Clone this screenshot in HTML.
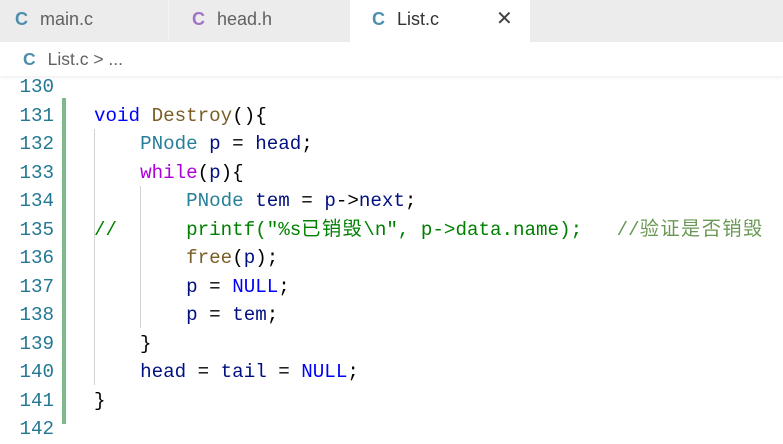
<!DOCTYPE html>
<html><head><meta charset="utf-8"><style>
*{margin:0;padding:0;box-sizing:border-box}
body{width:783px;height:424px;overflow:hidden;background:#fff;position:relative;font-family:"Liberation Sans","Noto Sans CJK SC",sans-serif}
.tabs{position:absolute;left:0;top:0;width:783px;height:42px;background:#ececec}
.tab{position:absolute;top:0;height:42px;font-size:18px;line-height:38px;color:#616161}
.tab .c,.bc .c{font-weight:bold;color:#4d8fad;margin-right:12px}
.bc{position:absolute;top:42px;left:0;width:783px;height:34px;font-size:17.5px;line-height:34px;color:#616161;padding-left:23px;box-shadow:0 2px 3px rgba(0,0,0,0.06)}
.code{position:absolute;left:0;top:73px;width:783px;font-family:"Liberation Mono","Noto Sans CJK SC",monospace;font-size:19.2px}
.ln{position:absolute;left:0;width:54px;text-align:right;color:#237893;height:28.5px;line-height:28.5px}
.tx{position:absolute;left:94px;white-space:pre;height:28.5px;line-height:28.5px;color:#000}
.k{color:#0000ff}.f{color:#795e26}.t{color:#267f99}.v{color:#001080}.m{color:#af00db}.cm{color:#008000}.cm2{color:#6a9955}
.cj{letter-spacing:1.5px}
.bar{position:absolute;left:62px;top:98px;width:4px;height:326px;background:#81b88b}
.g{position:absolute;width:1px;background:#d3d3d3}
</style></head><body>
<div class="tabs">
<div class="tab" style="left:0;width:168px;padding-left:15px"><span class="c">C</span>main.c</div>
<div style="position:absolute;left:168px;top:0;width:1px;height:42px;background:#f3f3f3"></div>
<div class="tab" style="left:169px;width:181px;padding-left:23px"><span class="c" style="color:#a074c4">C</span>head.h</div>
<div class="tab" style="left:350px;width:180px;padding-left:22px;background:#fff;color:#333"><span class="c">C</span>List.c<span style="position:absolute;left:146px;top:0;font-size:20px;color:#424242">✕</span></div>
</div>
<div class="bc"><span class="c">C</span>List.c &gt; ...</div>
<div class="bar"></div>
<div class="g" style="left:94px;top:129px;height:256px"></div>
<div class="g" style="left:140px;top:186px;height:142px"></div>
<div class="code">
<div class="ln" style="top:0">130</div>
<div class="ln" style="top:28.5px">131</div><div class="tx" style="top:28.5px"><span class="k">void</span> <span class="f">Destroy</span>(){</div>
<div class="ln" style="top:57px">132</div><div class="tx" style="top:57px">    <span class="t">PNode</span> <span class="v">p</span> = <span class="v">head</span>;</div>
<div class="ln" style="top:85.5px">133</div><div class="tx" style="top:85.5px">    <span class="m">while</span>(<span class="v">p</span>){</div>
<div class="ln" style="top:114px">134</div><div class="tx" style="top:114px">        <span class="t">PNode</span> <span class="v">tem</span> = <span class="v">p</span>-&gt;<span class="v">next</span>;</div>
<div class="ln" style="top:142.5px">135</div><div class="tx cm" style="top:142.5px">//      printf("%s<span class="cj">已销毁</span>\n", p-&gt;data.name);   <span class="cm2">//<span class="cj">验证是否销毁</span></span></div>
<div class="ln" style="top:171px">136</div><div class="tx" style="top:171px">        <span class="f">free</span>(<span class="v">p</span>);</div>
<div class="ln" style="top:199.5px">137</div><div class="tx" style="top:199.5px">        <span class="v">p</span> = <span class="k">NULL</span>;</div>
<div class="ln" style="top:228px">138</div><div class="tx" style="top:228px">        <span class="v">p</span> = <span class="v">tem</span>;</div>
<div class="ln" style="top:256.5px">139</div><div class="tx" style="top:256.5px">    }</div>
<div class="ln" style="top:285px">140</div><div class="tx" style="top:285px">    <span class="v">head</span> = <span class="v">tail</span> = <span class="k">NULL</span>;</div>
<div class="ln" style="top:313.5px">141</div><div class="tx" style="top:313.5px">}</div>
<div class="ln" style="top:342px">142</div>
</div>
</body></html>
